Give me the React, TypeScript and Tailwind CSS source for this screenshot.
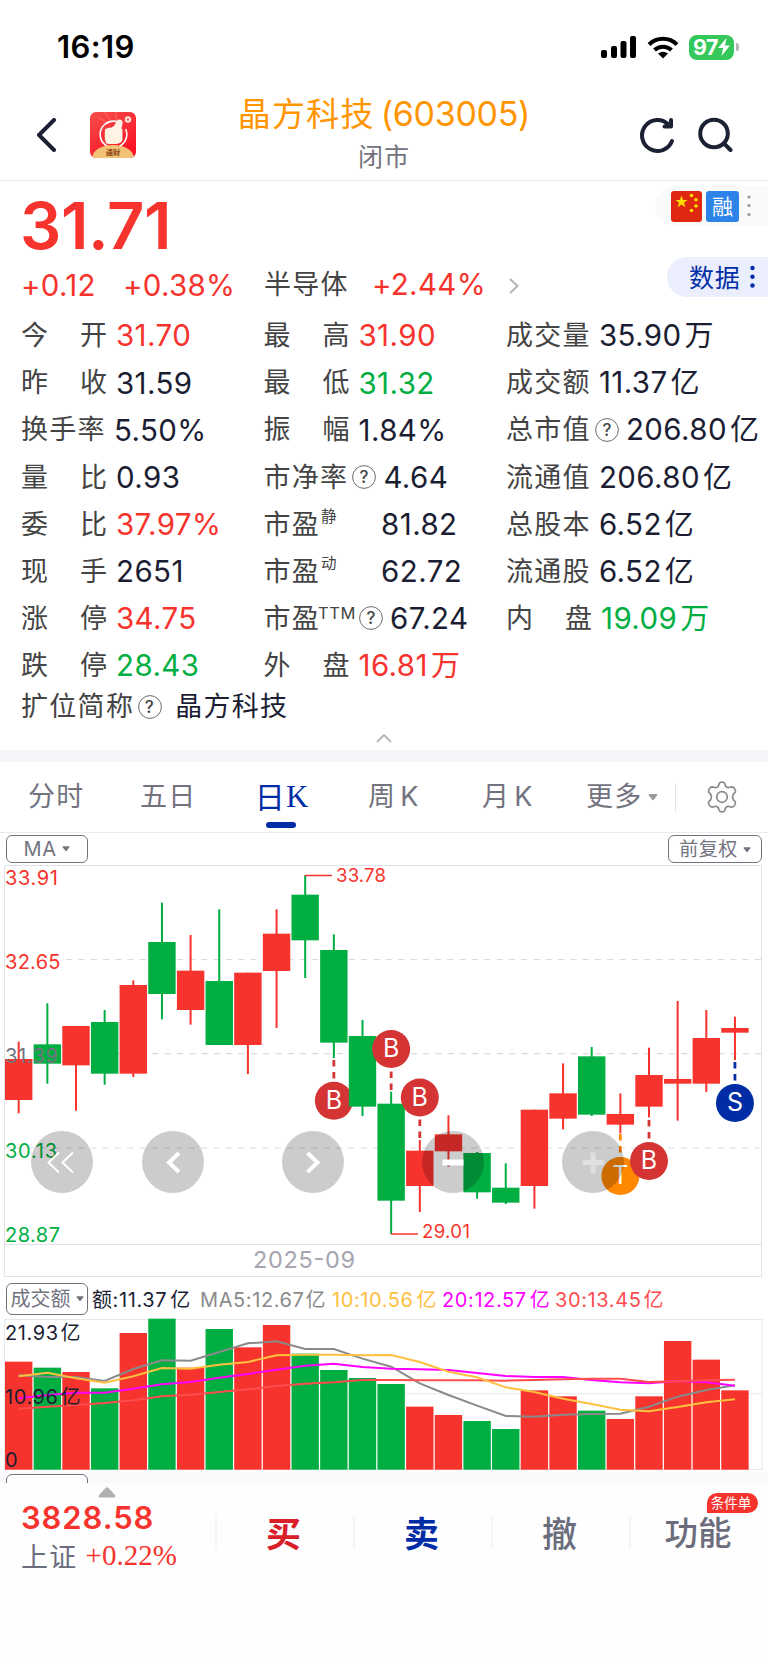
import React from "react";

const RED = "#f7332d";
const GREEN = "#00ae42";

interface Candle {
  up: boolean;
  high: number;
  top: number;
  bottom: number;
  low: number;
  vol: number;
}

// high / body top / body bottom / low in thirds of a pixel, vol is the bar top
const rows: [number, number, number, number, number, number][] = [
  [1, 545, 597, 720, 760, 275],
  [0, 430, 553, 611, 671, 293],
  [1, 498, 498, 616, 752, 306],
  [0, 450, 486, 641, 674, 355],
  [1, 361, 375, 641, 651, 189],
  [0, 128, 246, 402, 478, 146],
  [1, 225, 332, 450, 494, 293],
  [0, 148, 363, 555, 555, 177],
  [1, 338, 338, 555, 642, 232],
  [1, 148, 221, 333, 504, 165],
  [0, 45, 104, 241, 354, 251],
  [0, 223, 270, 548, 594, 300],
  [0, 480, 528, 740, 768, 324],
  [0, 695, 731, 1022, 1122, 342],
  [1, 840, 872, 978, 1056, 410],
  [1, 766, 823, 874, 920, 435],
  [0, 876, 879, 997, 1016, 453],
  [0, 910, 983, 1028, 1032, 477],
  [1, 749, 749, 978, 1046, 361],
  [1, 610, 700, 776, 808, 379],
  [0, 561, 589, 764, 768, 422],
  [1, 700, 762, 794, 820, 447],
  [1, 563, 645, 740, 772, 379],
  [1, 423, 657, 671, 782, 213],
  [1, 450, 534, 671, 696, 269],
  [1, 470, 504, 518, 600, 361],
];

const candles: Candle[] = rows.map(([up, high, top, bottom, low, vol]) => ({
  up: up === 1,
  high: high / 3,
  top: top / 3,
  bottom: bottom / 3,
  low: low / 3,
  vol: vol / 3,
}));

const maLines = [
  {
    color: "#8a8a8a",
    values: [315, 321, 321, 333, 297, 271, 272, 246, 220, 214, 237, 237, 266, 290, 340, 375, 407, 438, 440, 434, 432, 431, 410, 380, 360, 346],
  },
  {
    color: "#ff00ff",
    values: [385, 375, 368, 368, 356, 343, 336, 323, 312, 299, 287, 281, 291, 296, 298, 300, 309, 318, 321, 321, 330, 337, 340, 333, 337, 347],
  },
  {
    color: "#ff4d4d",
    values: [416, 410, 405, 399, 391, 379, 374, 366, 358, 348, 341, 337, 330, 330, 331, 331, 331, 332, 330, 328, 326, 326, 336, 334, 331, 329],
  },
  {
    color: "#ffc040",
    values: [319, 308, 325, 338, 319, 294, 296, 284, 276, 256, 254, 254, 256, 255, 276, 305, 322, 352, 366, 386, 402, 419, 424, 411, 397, 388],
  },
];

const cx = (i: number) => 18.7 + 28.65 * i;

interface MarkerProps {
  i: number;
  y: number;
  from: number;
  to: number;
  label: string;
  color: string;
}

const Marker: React.FC<MarkerProps> = ({ i, y, from, to, label, color }) => (
  <g>
    <line x1={cx(i)} x2={cx(i)} y1={from} y2={to} stroke={color} strokeWidth={2.8} strokeDasharray="6.5 5.5" />
    <circle cx={cx(i)} cy={y} r={19} fill={color} />
    <text x={cx(i)} y={y + 8} textAnchor="middle" fontSize={25} fill="#fff">
      {label}
    </text>
  </g>
);

const CandleShape: React.FC<{ c: Candle; i: number }> = ({ c, i }) => {
  const fill = c.up ? RED : GREEN;
  return (
    <g fill={fill}>
      <rect x={cx(i) - 1} y={c.high} width={2} height={c.low - c.high} />
      <rect x={cx(i) - 13.7} y={c.top} width={27.4} height={c.bottom - c.top} />
    </g>
  );
};

const KLineChart = () => (
  <svg width={768} height={420} viewBox="0 0 768 420" className="block">
    <g stroke="#dfe3e8" fill="none">
      <path d="M4.5 416.5V5.5H761.5V416.5Z" />
      <path d="M4.5 384.5H761.5" />
      <path d="M66 99.5H761M54 193.7H761M4 288H761" stroke="#d8dbe0" strokeDasharray="6.2 6.1" strokeWidth={1.2} />
    </g>
    {candles.slice(0, 12).map((c, i) => (
      <CandleShape key={i} c={c} i={i} />
    ))}
    <Marker i={11} y={240.7} from={200} to={222} label="B" color="#d43434" />
    {candles.slice(12).map((c, i) => (
      <CandleShape key={i} c={c} i={i + 12} />
    ))}
    <Marker i={13} y={189} from={230} to={210} label="B" color="#d43434" />
    <Marker i={14} y={237.5} from={278} to={256} label="B" color="#d43434" />
    <Marker i={21} y={316} from={274} to={296} label="T" color="#ff8800" />
    <Marker i={22} y={301} from={260} to={282} label="B" color="#d43434" />
    <Marker i={25} y={243} from={202} to={224} label="S" color="#002da6" />
    <g fontSize={18.6}>
      <path d="M305 15.5H332M391 374H418" stroke={RED} strokeWidth={1.6} />
      <text x={336} y={21.5} fill={RED} textLength={50}>33.78</text>
      <text x={422} y={377.5} fill={RED} textLength={48}>29.01</text>
    </g>
    <g fontSize={20}>
      <text x={5} y={25} fill={RED} textLength={53}>33.91</text>
      <text x={5} y={109} fill={RED} textLength={55.5}>32.65</text>
      <text x={5} y={203} fill="#73737f" textLength={53}>31.39</text>
      <text x={5} y={297.5} fill={GREEN} textLength={52}>30.13</text>
      <text x={5} y={381.5} fill={GREEN} textLength={55}>28.87</text>
    </g>
    <text x={253} y={408} fontSize={23.5} fill="#a5a5af" textLength={102}>2025-09</text>
  </svg>
);

const VolumeChart = () => (
  <svg width={768} height={155} viewBox="0 47 768 155" className="block">
    <path d="M4.5 199.5V49.5H762V199.5Z M4.5 123.7H762" stroke="#e6e8ec" fill="none" />
    {candles.map((c, i) => (
      <rect key={i} x={cx(i) - 13.7} y={c.vol} width={27.4} height={199.7 - c.vol} fill={c.up ? RED : GREEN} />
    ))}
    {maLines.map((line) => (
      <polyline
        key={line.color}
        points={line.values.map((v, i) => `${cx(i)},${v / 3}`).join(" ")}
        fill="none"
        stroke={line.color}
        strokeWidth={2}
      />
    ))}
    <g fontSize={20} fill="#1b1e33">
      <text x={5} y={70}>
        <tspan textLength={53}>21.93</tspan>
        <tspan x={60.5}>亿</tspan>
      </text>
      <text x={5} y={133.5}>
        <tspan textLength={53}>10.96</tspan>
        <tspan x={60.5}>亿</tspan>
      </text>
      <text x={5} y={196.5}>0</text>
    </g>
  </svg>
);

const Help = ({ className = "" }: { className?: string }) => (
  <svg viewBox="0 0 24 24" className={`size-6 shrink-0 ${className}`}>
    <circle cx={12} cy={12} r={11.4} fill="none" stroke="#6b6b6b" strokeWidth={1} />
    <text x={12} y={18} textAnchor="middle" fontSize={17} fontWeight={500} fill="#444">?</text>
  </svg>
);

interface Stat {
  label: string;
  sup?: string;
  help?: boolean;
  value: string;
  unit?: string;
  tone?: "red" | "green";
}

const columns: Stat[][] = [
  [
    { label: "今开", value: "31.70", tone: "red" },
    { label: "昨收", value: "31.59" },
    { label: "换手率", value: "5.50%" },
    { label: "量比", value: "0.93" },
    { label: "委比", value: "37.97%", tone: "red" },
    { label: "现手", value: "2651" },
    { label: "涨停", value: "34.75", tone: "red" },
    { label: "跌停", value: "28.43", tone: "green" },
  ],
  [
    { label: "最高", value: "31.90", tone: "red" },
    { label: "最低", value: "31.32", tone: "green" },
    { label: "振幅", value: "1.84%" },
    { label: "市净率", help: true, value: "4.64" },
    { label: "市盈", sup: "静", value: "81.82" },
    { label: "市盈", sup: "动", value: "62.72" },
    { label: "市盈", sup: "TTM", help: true, value: "67.24" },
    { label: "外盘", value: "16.81", unit: "万", tone: "red" },
  ],
  [
    { label: "成交量", value: "35.90", unit: "万" },
    { label: "成交额", value: "11.37", unit: "亿" },
    { label: "总市值", help: true, value: "206.80", unit: "亿" },
    { label: "流通值", value: "206.80", unit: "亿" },
    { label: "总股本", value: "6.52", unit: "亿" },
    { label: "流通股", value: "6.52", unit: "亿" },
    { label: "内盘", value: "19.09", unit: "万", tone: "green" },
  ],
];

const StatCell: React.FC<{ stat: Stat }> = ({ stat }) => {
  const { label, sup, help, value, unit, tone } = stat;
  const color = tone === "red" ? "text-[#f7332d]" : tone === "green" ? "text-[#00ae42]" : "text-[#1b1e33]";
  const spread = label.length === 2 && !sup;
  return (
    <div className="flex h-[47.1px] items-center whitespace-nowrap">
      <span
        className={`flex shrink-0 pt-[2px] text-[27px] text-[#444] ${spread ? "w-[86px] justify-between" : "tracking-[1.3px]"}`}
      >
        {spread ? label.split("").map((ch) => <span key={ch}>{ch}</span>) : label}
      </span>
      {sup && (
        <span
          className={`shrink-0 text-[#444] ${sup === "TTM" ? "-mt-[10px] -ml-[2px] w-[37px] text-[16.5px] tracking-[0.6px]" : "-mt-[14px] ml-px w-[57px] text-[15.5px]"}`}
        >
          {sup}
        </span>
      )}
      {help && <Help className="ml-[4px]" />}
      <span
        className={`text-[29.500px] tracking-[0.4px] ${color} ${help ? "ml-[7px]" : sup ? "ml-[3px]" : label.length === 3 ? "ml-[8px]" : "ml-[9px]"}`}
      >
        {value}
        {unit && <span className="ml-[3px] text-[29px]">{unit}</span>}
      </span>
    </div>
  );
};

const Header = () => (
  <header className="flex h-[87px] border-b border-[#ececef]">
    <div className="flex w-[200px] items-center gap-[33px] pb-[4px] pl-[36px]">
      <svg width={21} height={34} viewBox="0 0 21 34" fill="none" stroke="#1c2033" strokeWidth={4} strokeLinecap="round" strokeLinejoin="round">
        <path d="M18 2L3 17L18 32" />
      </svg>
      <svg width={46} height={46} viewBox="0 0 46 46">
        <defs>
          <linearGradient id="logo" x1="0" y1="0" x2="0.6" y2="1">
            <stop offset="0" stopColor="#f5504a" />
            <stop offset="1" stopColor="#fb1226" />
          </linearGradient>
          <clipPath id="logoClip">
            <rect width={46} height={46} rx={6} />
          </clipPath>
        </defs>
        <g clipPath="url(#logoClip)">
          <rect width={46} height={46} fill="url(#logo)" />
          <path d="M22 10L14 0M26 9V0M19 12L8 5" stroke="#ff8075" strokeWidth={0.7} />
          <path d="M26 9.4A13.3 13.3 0 1 0 35.6 17" fill="none" stroke="#fff" strokeWidth={1.6} />
          <path d="M15 20Q14 16.500 18 16Q21.500 16 24 14Q25.500 12 26 9.500Q27 7.500 29.500 7.500Q33.500 8 32.500 12L31.500 16Q33 18 32.500 20V28Q31 32 25 32H19Q15 32 15.500 28.500Q14 27.500 15 25.500Q14 24 15 22.500Q14.200 21 15 20Z" fill="#fff3e6" />
          <circle cx={38} cy={7.500} r={3.2} fill="#ffe6e0" />
          <path d="M36.500 6.500h3l-1.500 3z" fill="#f5504a" />
          <ellipse cx={23} cy={46} rx={21} ry={13} fill="#f3c276" />
          <text x={23} y={42.500} textAnchor="middle" fontSize={7.2} fontWeight={700} fill="#8a4310">通财</text>
        </g>
      </svg>
    </div>
    <div className="flex flex-1 flex-col items-center whitespace-nowrap">
      <div className="mt-[-3px] h-[47px] text-[33px] leading-[46px] text-[#ff9500]">
        <span className="tracking-[1.2px]">晶方科技</span>
        <span className="ml-[6px] text-[34px] tracking-[-0.3px]">(603005)</span>
      </div>
      <div className="h-[40px] text-[25px] leading-[38px] tracking-[1px] text-[#73737f]">闭市</div>
    </div>
    <div className="flex w-[200px] items-center justify-end gap-[22px] pr-[35px] pb-[5px]">
      <svg width={36} height={38} viewBox="0 0 36 38" fill="none" stroke="#1c2033" strokeWidth={4} strokeLinecap="round" strokeLinejoin="round">
        <path d="M33 25A15.500 15.500 0 1 1 29.500 8.500" />
        <path d="M32 4V10.500H25.500L31 8" />
      </svg>
      <svg width={36} height={38} viewBox="0 0 36 38" fill="none" stroke="#1c2033" strokeWidth={4} strokeLinecap="round">
        <circle cx={17} cy={17.500} r={13.800} />
        <path d="M27 27.500L33.500 34" />
      </svg>
    </div>
  </header>
);

const StatusBar = () => (
  <div className="flex h-[94px] items-center justify-between pr-[30px] pl-[57px]">
    <span className="pt-px text-[31px] font-semibold tracking-[0.4px] text-black">16:19</span>
    <div className="flex items-center gap-[10px]">
      <svg width={36} height={22} viewBox="0 0 36 22">
        <rect x={0} y={14} width={6} height={8} rx={2} />
        <rect x={10} y={10} width={6} height={12} rx={2} />
        <rect x={19.500} y={5} width={6} height={17} rx={2} />
        <rect x={29} y={0} width={6} height={22} rx={2} />
      </svg>
      <svg width={32} height={23} viewBox="0 0 32 23" fill="none" stroke="#000" strokeWidth={4}>
        <path d="M2 8.500A20 20 0 0 1 30 8.500" />
        <path d="M7.500 14A12.500 12.500 0 0 1 24.500 14" />
        <path d="M16 22.500L11 17.500Q16 14 21 17.500Z" fill="#000" stroke="none" />
      </svg>
      <div className="-mr-px flex items-center gap-[2px]">
        <div className="flex h-[25px] w-[45px] items-center justify-center rounded-[8px] bg-[#34c759] text-[21.500px] font-bold text-white">
          <span className="tracking-[-0.5px]">97</span>
          <svg width={12} height={18} viewBox="0 0 12 18" fill="#fff">
            <path d="M8.500 0L0 10H5L3.500 18L12 7.500H7Z" />
          </svg>
        </div>
        <div className="h-[8px] w-[3px] rounded-r-full bg-[#b5b5b5]" />
      </div>
    </div>
  </div>
);

const Quote = () => (
  <section className="h-[131px]">
    <div className="flex h-[76px] justify-between">
      <div className="pl-[20px] text-[65px] leading-[89px] font-semibold tracking-[-0.4px] text-[#f7332d]">31.71</div>
      <div className="mt-[5px] flex h-[40px] w-[113px] items-center rounded-l-full bg-[#fafafa] pl-[16px]">
        <svg width={31} height={31} viewBox="0 0 31 31">
          <rect width={31} height={31} rx={3} fill="#de2910" />
          <g fill="#ffde00">
            <path d="M10.500 4.500L12 9H16.500L13 11.800L14.300 16.200L10.500 13.500L6.700 16.200L8 11.800L4.500 9H9Z" />
            <circle cx={20.500} cy={4.500} r={1.800} />
            <circle cx={25} cy={8.800} r={1.800} />
            <circle cx={25} cy={15} r={1.800} />
            <circle cx={20.500} cy={19.500} r={1.800} />
          </g>
        </svg>
        <span className="ml-[4px] flex h-[31px] w-[33px] items-center justify-center rounded-[3px] bg-[#2e83e8] text-[21px] leading-none text-white">
          融
        </span>
        <svg width={4} height={22} viewBox="0 0 4 22" className="ml-[8px]" fill="#999">
          <circle cx={2} cy={2} r={1.600} />
          <circle cx={2} cy={10.500} r={1.600} />
          <circle cx={2} cy={19.500} r={1.600} />
        </svg>
      </div>
    </div>
    <div className="flex justify-between">
      <div className="flex h-[55px] items-center pt-[2px] pl-[21px] text-[29.500px] tracking-[0.3px] whitespace-nowrap text-[#f7332d]">
        <span className="w-[102px]">+0.12</span>
        <span className="w-[141px]">+0.38%</span>
        <span className="w-[108px] text-[27px] tracking-[1.3px] text-[#444]">半导体</span>
        <span className="-mt-[3px] w-[137px]">+2.44%</span>
        <svg width={10} height={16} viewBox="0 0 10 16" fill="none" stroke="#b5b5b5" strokeWidth={2}>
          <path d="M1 1L8.500 8L1 15" />
        </svg>
      </div>
      <div className="flex h-[40px] w-[101px] items-center rounded-l-full bg-[#eaeefd] pl-[22px] text-[25px] tracking-[0.8px] text-[#002da6]">
        <span className="pt-[3px]">数据</span>
        <svg width={5} height={24} viewBox="0 0 5 24" className="ml-[9px]" fill="#002da6">
          <circle cx={2.500} cy={3} r={2.200} />
          <circle cx={2.500} cy={11.800} r={2.200} />
          <circle cx={2.500} cy={20.500} r={2.200} />
        </svg>
      </div>
    </div>
  </section>
);

const Caret = ({ className = "" }: { className?: string }) => (
  <svg width={10} height={7} viewBox="0 0 10 7" className={className} fill="currentColor">
    <path d="M0.500 1Q0.500 0 2 0H8Q9.500 0 9.500 1L5.800 5.800Q5 6.600 4.200 5.800Z" />
  </svg>
);

const Tabs = () => (
  <nav className="flex h-[71px] items-center border-b border-[#ebebee] text-[27px] tracking-[1.3px] whitespace-nowrap text-[#73737f]">
    <span className="w-[112px] pl-[28px]">分时</span>
    <span className="w-[113px] pl-[28px]">五日</span>
    <span className="relative flex w-[113px] items-center justify-center pb-px text-[#002da6]">
      <span className="text-[30px] leading-[40px]">日</span>
      <span className="font-[Liberation_Serif] text-[31px] leading-[40px] tracking-normal">K</span>
      <i className="absolute bottom-[-10px] left-[41px] h-[6px] w-[30px] rounded-full bg-[#002da6]" />
    </span>
    <span className="w-[114px] pl-[30px]">周<span className="ml-[4px]">K</span></span>
    <span className="w-[113px] pl-[30px]">月<span className="ml-[4px]">K</span></span>
    <span className="flex w-[110px] items-center pl-[21px]">
      更多
      <Caret className="ml-[5px] text-[#999]" />
    </span>
    <i className="h-[29px] w-px bg-[#e3e3e8]" />
    <svg width={30} height={32} viewBox="0 0 30 32" className="ml-[31px]" fill="none" stroke="#8a8a8a" strokeWidth={1.700} strokeLinejoin="round">
      <path d="M12.200 2.500Q12.700 1.200 15 1.200T17.800 2.500L18.600 5.200Q19.800 7 22 6.500L24.800 5.900Q26.500 5.800 27.700 7.900T28.200 11.200L26.200 13.400Q24.900 16 26.200 18.600L28.200 20.800Q28.900 22 27.700 24.100T24.800 26.100L22 25.500Q19.800 25 18.600 26.800L17.800 29.500Q17.300 30.800 15 30.800T12.200 29.500L11.400 26.800Q10.200 25 8 25.500L5.200 26.100Q3.500 26.200 2.300 24.100T1.800 20.800L3.800 18.600Q5.100 16 3.800 13.400L1.800 11.200Q1.100 10 2.300 7.900T5.200 5.900L8 6.500Q10.200 7 11.400 5.200Z" />
      <circle cx={15} cy={16} r={5.300} />
    </svg>
  </nav>
);

const navButtons = [
  { left: "left-[31px]", path: "M28 21.500L17.500 31.500L28 41.500M42 21.500L31.500 31.500L42 41.500", width: 2, color: "#fff" },
  { left: "left-[142px]", path: "M37 22L27 31.500L37 41", width: 4, color: "#fff" },
  { left: "left-[282px]", path: "M25.500 22L35.500 31.500L25.500 41", width: 4, color: "#fff" },
  { left: "left-[422px]", path: "M20.500 31.500H41.500", width: 6, color: "#fff" },
  { left: "left-[562px]", path: "M20.500 31.500H41.500M31 21.500V42", width: 5, color: "#e0e0e0" },
];

const BottomBar = () => (
  <footer className="relative flex h-[180px] bg-[#fefefe]">
    <div className="w-[215px] pt-[3px] pl-[21px] whitespace-nowrap">
      <svg width={18} height={12} viewBox="0 0 18 12" className="ml-[77px]" fill="#b0b0b0">
        <path d="M7.500 2Q9 0.500 10.500 2L17 9Q18 11.500 16 11.500H2Q0 11.500 1 9Z" />
      </svg>
      <div className="h-[40px] text-[31px] leading-[40px] font-semibold tracking-[0.9px] text-[#f7332d]">3828.58</div>
      <div className="flex h-[36px] items-center">
        <span className="pt-[4px] text-[27px] tracking-[1.3px] text-[#6b6d7c]">上证</span>
        <span className="ml-[8px] font-[Liberation_Serif] text-[29px] text-[#f7332d]">+0.22%</span>
      </div>
    </div>
    <div className="mt-[32px] flex h-[34px] flex-1 items-center text-center text-[35px] font-medium text-[#6b6d7c]">
      <div className="h-[33px] w-[138px] border-l-2 border-[#f5f5f9] pr-[3px] leading-[37px] font-bold text-[#d92028]">买</div>
      <div className="h-[33px] w-[138px] border-l-2 border-[#f5f5f9] pr-[3px] leading-[37px] font-bold text-[#002da6]">卖</div>
      <div className="h-[33px] w-[138px] border-l-2 border-[#f5f5f9] pr-[3px] leading-[37px]">撤</div>
      <div className="h-[33px] flex-1 border-l-2 border-[#f5f5f9] pr-[3px] text-[33.500px] leading-[35px]">功能</div>
    </div>
    <span className="absolute top-[10px] left-[707px] flex h-[20px] w-[51px] items-center justify-center rounded-full rounded-bl-none bg-[#f7332d] pt-px pr-[3px] text-[13.500px] leading-none text-white">
      条件单
    </span>
  </footer>
);

const App: React.FC = () => (
  <div className="h-[1663px] w-[768px] overflow-hidden bg-white font-[Inter,'Noto_Sans_CJK_SC',sans-serif]">
    <StatusBar />
    <Header />
    <Quote />
    <section className="h-[438px]">
      <div className="flex pl-[21px]">
        {columns.map((col, i) => (
          <div key={i} className="w-[242.500px] shrink-0">
            {col.map((stat) => (
              <StatCell key={stat.label + (stat.sup ?? "")} stat={stat} />
            ))}
          </div>
        ))}
      </div>
      <div className="flex h-[36px] items-center pl-[21px] text-[27px] tracking-[1.3px] text-[#444]">
        扩位简称
        <Help className="ml-[4px]" />
        <span className="ml-[13px] text-[#1b1e33]">晶方科技</span>
      </div>
      <svg width={16} height={9} viewBox="0 0 16 9" className="mx-auto mt-[9px]" fill="none" stroke="#b5b5b5" strokeWidth={1.800}>
        <path d="M1 8L8 1L15 8" />
      </svg>
    </section>
    <div className="h-[12px] bg-[#f4f6fa]" />
    <Tabs />
    <div className="flex h-[27px] items-end justify-between pr-[6px] pl-[6px] text-[20px] tracking-[0.5px] text-[#73737f]">
      <div className="flex h-[28px] w-[82px] shrink-0 translate-y-[3px] items-center justify-center gap-[6px] rounded-[6px] border-[1.500px] border-[#73737f]">
        MA
        <Caret className="size-[8px]" />
      </div>
      <div className="flex h-[28px] w-[94px] shrink-0 translate-y-[3px] items-center justify-center gap-[5px] rounded-[6px] border-[1.500px] border-[#73737f] pt-[2px] text-[19px] whitespace-nowrap">
        前复权
        <Caret className="size-[8px]" />
      </div>
    </div>
    <div className="relative h-[420px]">
      <KLineChart />
      {navButtons.map((b) => (
        <button key={b.left} className={`absolute top-[271px] size-[62px] rounded-full bg-black/20 ${b.left}`}>
          <svg width={62} height={62} viewBox="0 0 62 62" fill="none" stroke={b.color} strokeWidth={b.width}>
            <path d={b.path} />
          </svg>
        </button>
      ))}
    </div>
    <div className="flex h-[37px] items-center text-[20px] whitespace-nowrap">
      <div className="ml-[6px] flex h-[32px] w-[82px] shrink-0 items-center justify-center gap-[5px] rounded-[6px] border-[1.500px] border-[#73737f] text-[20px] text-[#73737f]">
        成交额
        <Caret className="size-[8px]" />
      </div>
      <div className="flex pt-[3px] tracking-[0.6px]">
        <span className="ml-[4px] w-[108px] text-[#1b1e33]">额:11.37<span className="ml-[3px]">亿</span></span>
        <span className="w-[132px] text-[#8a8a8a]">MA5:12.67<span className="ml-px">亿</span></span>
        <span className="w-[110px] text-[#ffc040]">10:10.56<span className="ml-[3px]">亿</span></span>
        <span className="w-[113px] text-[#ff00ff]">20:12.57<span className="ml-[3px]">亿</span></span>
        <span className="text-[#ff4d4d]">30:13.45<span className="ml-[2px]">亿</span></span>
      </div>
    </div>
    <VolumeChart />
    <div className="h-[11px] overflow-hidden bg-[#fafafd] pt-[2px] pl-[6px]">
      <div className="h-[32px] w-[82px] rounded-[6px] border-[1.500px] border-[#73737f] bg-white" />
    </div>
    <BottomBar />
  </div>
);

export default App;
